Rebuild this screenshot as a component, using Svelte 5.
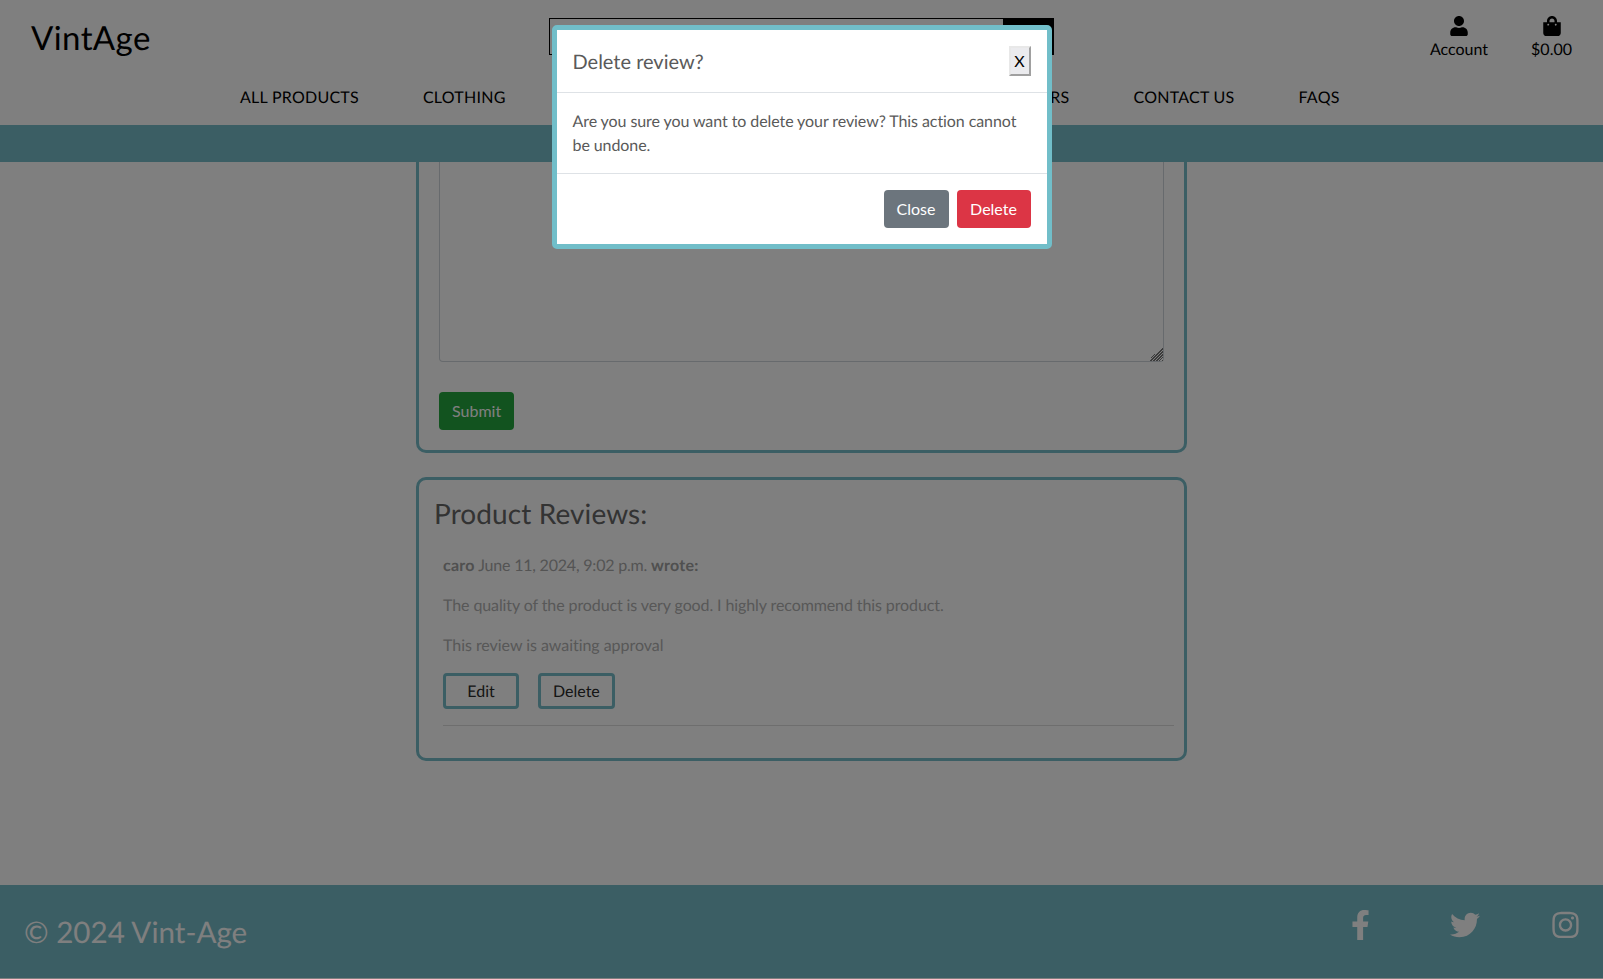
<script>
  // Product page with the "delete review" confirmation modal open
  const navLinks = ['ALL PRODUCTS', 'CLOTHING', 'ACCESSORIES', 'HOME & GARDEN', 'SPECIAL OFFERS', 'CONTACT US', 'FAQS'];
</script>

<div class="page">
  <header class="site-header">
    <div class="top-row">
      <a class="logo" href="#top">VintAge</a>
      <form class="search">
        <input type="text" placeholder="Search our site" />
        <button type="button" aria-label="Search">
          <svg viewBox="0 0 512 512" width="16" height="16"><path fill="currentColor" d="M505 442.700L405.300 343c-4.500-4.500-10.600-7-17-7H372c27.600-35.300 44-79.700 44-128C416 93.100 322.900 0 208 0S0 93.100 0 208s93.100 208 208 208c48.300 0 92.700-16.400 128-44v16.300c0 6.400 2.500 12.500 7 17l99.700 99.700c9.400 9.400 24.600 9.400 33.900 0l28.300-28.300c9.400-9.400 9.400-24.600.1-34zM208 336c-70.700 0-128-57.200-128-128 0-70.700 57.200-128 128-128 70.700 0 128 57.200 128 128 0 70.700-57.200 128-128 128z"/></svg>
        </button>
      </form>
      <div class="tools">
        <a class="tool" href="#top">
          <svg viewBox="0 0 448 512" width="18" height="20"><path fill="currentColor" d="M224 256c70.700 0 128-57.300 128-128S294.700 0 224 0 96 57.300 96 128s57.300 128 128 128zm89.600 32h-16.700c-22.200 10.200-46.900 16-72.900 16s-50.600-5.800-72.900-16h-16.700C60.200 288 0 348.200 0 422.400V464c0 26.500 21.500 48 48 48h352c26.500 0 48-21.500 48-48v-41.600c0-74.200-60.200-134.400-134.400-134.400z"/></svg>
          <span>Account</span>
        </a>
        <a class="tool" href="#top">
          <svg viewBox="0 0 448 512" width="18" height="20"><path fill="currentColor" d="M352 160v-32C352 57.420 294.579 0 224 0 153.420 0 96 57.420 96 128v32H0v272c0 44.183 35.817 80 80 80h288c44.183 0 80-35.817 80-80V160h-96zm-192-32c0-35.290 28.710-64 64-64s64 28.710 64 64v32H160v-32zm160 120c-13.255 0-24-10.745-24-24s10.745-24 24-24 24 10.745 24 24-10.745 24-24 24zm-192 0c-13.255 0-24-10.745-24-24s10.745-24 24-24 24 10.745 24 24-10.745 24-24 24z"/></svg>
          <span>$0.00</span>
        </a>
      </div>
    </div>
    <nav class="main-nav">
      {#each navLinks as link}
        <a href="#top">{link}</a>
      {/each}
    </nav>
  </header>

  <div class="band"></div>

  <main class="content">
    <form class="panel review-form">
      <textarea aria-label="Review"></textarea>
      <button type="button" class="btn btn-submit">Submit</button>
    </form>

    <section class="panel reviews">
      <h2>Product Reviews:</h2>
      <div class="review">
        <p class="byline"><strong>caro</strong> June 11, 2024, 9:02 p.m. <strong>wrote:</strong></p>
        <p>The quality of the product is very good. I highly recommend this product.</p>
        <p class="pending">This review is awaiting approval</p>
        <div class="review-actions">
          <a class="outline edit" href="#top">Edit</a>
          <a class="outline" href="#top">Delete</a>
        </div>
        <hr />
      </div>
    </section>
  </main>

  <footer class="site-footer">
    <span class="copyright">© 2024 Vint-Age</span>
    <div class="social">
      <svg class="fb" viewBox="0 0 320 512" width="19" height="30"><path fill="currentColor" d="M279.140 288l14.220-92.660h-88.910v-60.130c0-25.350 12.420-50.060 52.240-50.060h40.420V6.260S260.430 0 225.360 0c-73.220 0-121.080 44.380-121.080 124.720v70.620H22.890V288h81.390v224h100.170V288z"/></svg>
      <svg class="tw" viewBox="0 0 512 512" width="30" height="30"><path fill="currentColor" d="M459.370 151.716c.325 4.548.325 9.097.325 13.645 0 138.720-105.583 298.558-298.558 298.558-59.452 0-114.680-17.219-161.137-47.106 8.447.974 16.568 1.299 25.340 1.299 49.055 0 94.213-16.568 130.274-44.832-46.132-.975-84.792-31.188-98.112-72.772 6.498.974 12.995 1.624 19.818 1.624 9.421 0 18.843-1.300 27.614-3.573-48.081-9.747-84.143-51.980-84.143-102.985v-1.299c13.969 7.797 30.214 12.670 47.431 13.319-28.264-18.843-46.781-51.005-46.781-87.391 0-19.492 5.197-37.360 14.294-52.954 51.655 63.675 129.300 105.258 216.365 109.807-1.624-7.797-2.599-15.918-2.599-24.040 0-57.828 46.782-104.934 104.934-104.934 30.213 0 57.502 12.670 76.670 33.137 23.715-4.548 46.456-13.320 66.599-25.340-7.798 24.366-24.366 44.833-46.132 57.827 21.117-2.273 41.584-8.122 60.426-16.243-14.292 20.791-32.161 39.308-52.628 54.253z"/></svg>
      <svg class="ig" viewBox="0 0 448 512" width="27" height="30"><path fill="currentColor" d="M224.100 141c-63.600 0-114.900 51.300-114.900 114.900s51.300 114.900 114.900 114.900S339 319.500 339 255.900 287.700 141 224.100 141zm0 189.600c-41.100 0-74.700-33.500-74.700-74.700s33.500-74.700 74.700-74.700 74.700 33.500 74.700 74.700-33.600 74.700-74.700 74.700zm146.400-194.300c0 14.900-12 26.800-26.800 26.800-14.900 0-26.800-12-26.800-26.800s12-26.800 26.800-26.800 26.800 12 26.800 26.800zm76.100 27.200c-1.700-35.900-9.900-67.700-36.200-93.900-26.200-26.200-58-34.400-93.900-36.200-37-2.100-147.900-2.100-184.900 0-35.800 1.700-67.600 9.900-93.900 36.100s-34.400 58-36.200 93.900c-2.100 37-2.100 147.900 0 184.900 1.700 35.900 9.900 67.700 36.200 93.900s58 34.400 93.900 36.200c37 2.100 147.900 2.100 184.900 0 35.900-1.700 67.700-9.900 93.900-36.200 26.200-26.200 34.400-58 36.200-93.900 2.100-37 2.100-147.800 0-184.800zM398.800 388c-7.800 19.600-22.900 34.700-42.600 42.600-29.500 11.700-99.500 9-132.100 9s-102.700 2.600-132.100-9c-19.600-7.800-34.700-22.900-42.600-42.600-11.700-29.500-9-99.500-9-132.100s-2.600-102.700 9-132.100c7.800-19.600 22.900-34.700 42.600-42.600 29.500-11.700 99.500-9 132.100-9s102.700-2.600 132.100 9c19.600 7.800 34.700 22.900 42.600 42.600 11.700 29.500 9 99.500 9 132.100s2.700 102.700-9 132.100z"/></svg>
    </div>
  </footer>
</div>

<div class="backdrop"></div>

<div class="modal-wrap">
  <div class="modal" role="dialog" aria-labelledby="modal-title">
    <div class="modal-header">
      <h5 id="modal-title">Delete review?</h5>
      <button type="button" class="close-x">X</button>
    </div>
    <div class="modal-body">
      Are you sure you want to delete your review? This action cannot be undone.
    </div>
    <div class="modal-footer">
      <button type="button" class="btn btn-close">Close</button>
      <button type="button" class="btn btn-delete">Delete</button>
    </div>
  </div>
</div>

<style>
  :global(body) {
    margin: 0;
    background: #fff;
    font-family: Lato, "Open Sans", sans-serif;
    font-size: 16px;
    line-height: 24px;
    text-rendering: geometricPrecision;
    overflow: hidden;
  }

  a {
    color: inherit;
    text-decoration: none;
  }

  .page {
    display: flex;
    flex-direction: column;
    height: 978px;
  }

  .site-header {
    height: 125px;
    flex: none;
    color: #000;
  }

  .top-row {
    display: flex;
    align-items: flex-start;
    height: 80px;
    padding-top: 18px;
    box-sizing: border-box;
  }

  .logo {
    flex: 0 0 518px;
    padding: 1px 0 0 31px;
    font-size: 33px;
    line-height: 38px;
    letter-spacing: 0.4px;
  }

  .search {
    display: flex;
    width: 505px;
    height: 37px;
    box-sizing: border-box;
    border: 1px solid #000;
  }

  .search input {
    flex: 1;
    min-width: 0;
    border: 0;
    padding: 6px 12px;
    background: transparent;
    font: inherit;
  }

  .search button {
    width: 50px;
    border: 0;
    background: #000;
    color: #fff;
  }

  .tools {
    flex: 1;
    display: flex;
    justify-content: flex-end;
    gap: 43px;
    padding-right: 31px;
    margin-top: -2px;
  }

  .tool {
    display: flex;
    flex-direction: column;
    align-items: center;
  }

  .tool svg {
    margin-bottom: 2px;
  }

  .main-nav {
    display: flex;
    gap: 64px;
    padding-left: 240px;
    line-height: 24px;
    margin-top: 6px;
    letter-spacing: 0.25px;
  }

  .band {
    height: 37px;
    flex: none;
    background: #76bcc8;
  }

  .content {
    flex: 1;
    display: flex;
    flex-direction: column;
    align-items: center;
    gap: 24px;
    overflow: hidden;
  }

  .panel {
    width: 771px;
    box-sizing: border-box;
    border: 3px solid #76bcc8;
    border-radius: 10px;
  }

  .review-form {
    border-top: 0;
    border-radius: 0 0 10px 10px;
    padding: 0 20px 20px 20px;
  }

  textarea {
    display: block;
    width: 100%;
    height: 200px;
    box-sizing: border-box;
    border: 1px solid #ced4da;
    border-top: 0;
    border-radius: 0 0 4px 4px;
    margin-bottom: 30px;
    background: #fff;
    resize: vertical;
  }

  textarea::-webkit-resizer {
    background:
      linear-gradient(135deg, #fff 50%, transparent 50%),
      repeating-linear-gradient(135deg, #777 0 1px, #fff 1px 2px);
  }

  .btn {
    font: inherit;
    color: #fff;
    padding: 6px 12px;
    height: 38px;
    border: 1px solid transparent;
    border-radius: 4px;
  }

  .btn-submit {
    background: #24a63e;
    display: block;
  }

  .btn-close {
    background: #6c757d;
  }

  .btn-delete {
    width: 74px;
    background: #dc3545;
  }

  .reviews {
    padding: 16px 10px 32px 15px;
  }

  .reviews h2 {
    margin: 0 0 23px;
    font-size: 28px;
    font-weight: 400;
    line-height: 34px;
    letter-spacing: 0.1px;
    color: #666;
  }

  .review {
    padding-left: 9px;
    color: #b0b0b0;
  }

  .review p {
    margin: 0 0 15px;
    padding-top: 1px;
    letter-spacing: -0.1px;
  }

  .review .byline {
    color: #a8a8a8;
    letter-spacing: -0.2px;
  }

  .byline strong {
    color: #a0a0a0;
    font-weight: 700;
    letter-spacing: 0.25px;
  }

  .review .pending {
    letter-spacing: -0.04px;
  }

  .review-actions {
    display: flex;
    gap: 19px;
  }

  .outline {
    display: block;
    height: 36px;
    box-sizing: border-box;
    padding: 4px 12px 2px;
    border: 3px solid #76bcc8;
    border-radius: 4px;
    color: #2a2a2a;
  }

  .outline.edit {
    width: 76px;
    text-align: center;
    padding: 4px 0 2px;
  }

  .review hr {
    margin: 16px 0 0;
    border: 0;
    border-top: 1px solid #ddd;
  }

  .site-footer {
    flex: none;
    height: 93px;
    background: #76bcc8;
    color: #fff;
    display: flex;
    align-items: center;
    justify-content: space-between;
    padding-left: 24px;
  }

  .copyright {
    font-size: 29.6px;
    line-height: 38px;
    padding-top: 2px;
  }

  .social {
    display: flex;
    align-items: center;
    margin-top: -13px;
    padding-right: 24px;
    gap: 0;
  }

  .social .tw {
    margin-left: 80px;
  }

  .social .ig {
    margin-left: 72px;
  }

  .backdrop {
    position: fixed;
    inset: 0;
    background: rgba(0, 0, 0, 0.5);
  }

  .modal-wrap {
    position: fixed;
    inset: 0;
    display: flex;
    justify-content: center;
    align-items: flex-start;
    padding-top: 25px;
  }

  .modal {
    width: 500px;
    box-sizing: border-box;
    background: #fff;
    border: 5px solid #71bec9;
    border-radius: 5px;
    color: #5a5a5a;
  }

  .modal-header {
    display: flex;
    align-items: center;
    justify-content: space-between;
    padding: 16px;
    border-bottom: 1px solid #dee2e6;
  }

  .modal-header h5 {
    margin: 0;
    padding-top: 2px;
    font-size: 20px;
    font-weight: 400;
    line-height: 24px;
  }

  .close-x {
    width: 22px;
    height: 30px;
    padding: 1px 0;
    background: #ebebee;
    border: 2px solid;
    border-color: #e8e8e8 #a0a0a0 #a0a0a0 #e8e8e8;
    font: inherit;
    color: #000;
  }

  .modal-body {
    padding: 17px 16px 15px;
    letter-spacing: -0.08px;
  }

  .modal-footer {
    display: flex;
    justify-content: flex-end;
    gap: 8px;
    padding: 16px;
    border-top: 1px solid #dee2e6;
  }
</style>
